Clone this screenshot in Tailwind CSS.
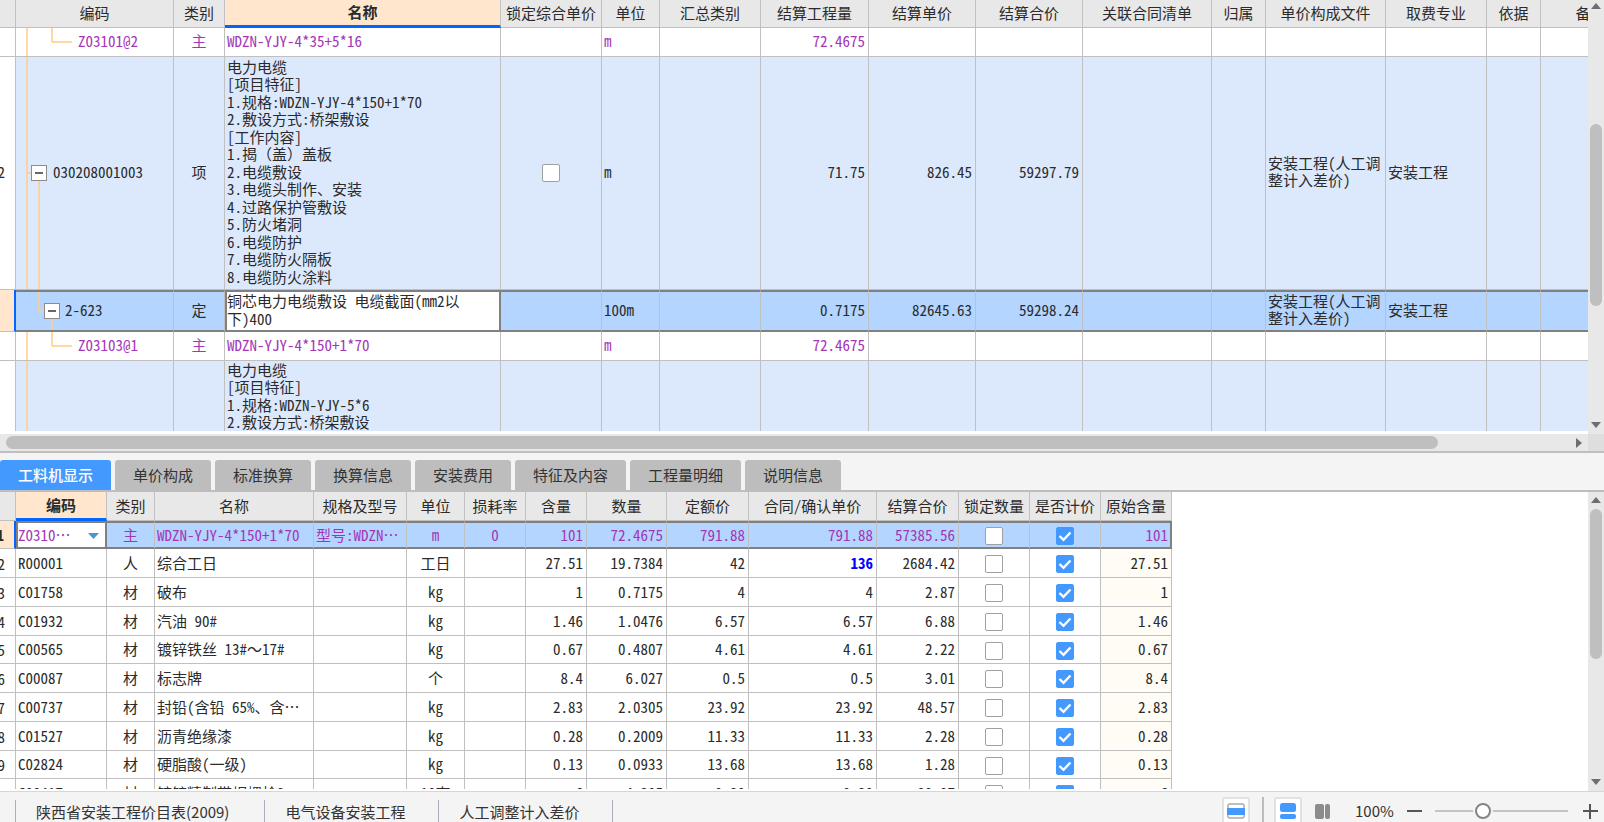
<!DOCTYPE html>
<html lang="zh-CN">
<head>
<meta charset="utf-8">
<title>结算工程量清单</title>
<script src="https://cdn.jsdelivr.net/npm/@tailwindcss/browser@4"></script>
</head>
<body class="bg-white text-[#2b2b2b]">
<div class="flex h-screen flex-col overflow-hidden font-['Noto_Sans_Mono_CJK_SC','Noto_Sans_CJK_SC',monospace] text-[15px] leading-[17px]">

  <!-- Bill of quantities -->
  <section class="flex h-[451px] shrink-0 flex-col">
    <div class="flex min-h-0 flex-1">
      <div class="mb-[3px] min-w-0 flex-1 overflow-hidden">
        <table class="w-[1641px] table-fixed border-separate border-spacing-0">
          <colgroup>
            <col class="w-4"><col class="w-[158px]"><col class="w-[51px]"><col class="w-[276px]"><col class="w-[101px]"><col class="w-[58px]"><col class="w-[101px]"><col class="w-[108px]"><col class="w-[107px]"><col class="w-[107px]"><col class="w-[129px]"><col class="w-[54px]"><col class="w-[120px]"><col class="w-[101px]"><col class="w-[54px]"><col class="w-[100px]">
          </colgroup>
          <thead id="bill-head"></thead>
          <tbody id="bill-body"></tbody>
        </table>
      </div>
      <div class="flex w-4 flex-col items-center bg-[#e8e8e8]">
        <svg class="mt-[3px] h-[6px] w-[10px] shrink-0" viewBox="0 0 10 6"><path d="M0 6 5 0l5 6z" fill="#6d6d75"/></svg>
        <div class="mt-[115px] h-[182px] w-3 rounded-full bg-[#bfbfbf]"></div>
        <svg class="mt-auto mb-[6px] h-[6px] w-[10px] shrink-0" viewBox="0 0 10 6"><path d="M0 0 5 6l5-6z" fill="#6d6d75"/></svg>
      </div>
    </div>
    <div class="flex h-[17px] shrink-0 bg-[#e8e8e8]">
      <div class="flex flex-1 items-center pl-[6px]">
        <div class="h-[13px] flex-1 rounded-full bg-[#bfbfbf]"></div>
        <svg class="mr-[6px] ml-[138px] h-[10px] w-[6px]" viewBox="0 0 6 10"><path d="M0 0 6 5 0 10z" fill="#6d6d75"/></svg>
      </div>
      <div class="w-4 bg-[#dedede]"></div>
    </div>
  </section>
  <div class="h-[2px] shrink-0 bg-[#bfbfbf]"></div>

  <!-- Detail tabs -->
  <nav class="flex shrink-0 gap-1 bg-[#f4f4f4] pt-[7px] font-['Noto_Sans_CJK_SC',sans-serif] text-[#333]" role="tablist">
    <button role="tab" aria-selected="true" class="h-[30px] rounded-t-[3px] bg-[#4499ff] px-[18px] pb-[2px] font-medium text-white">工料机显示</button>
    <button role="tab" class="h-[30px] rounded-t-[3px] bg-[#bdbdbd] px-[18px] pb-[2px]">单价构成</button>
    <button role="tab" class="h-[30px] rounded-t-[3px] bg-[#bdbdbd] px-[18px] pb-[2px]">标准换算</button>
    <button role="tab" class="h-[30px] rounded-t-[3px] bg-[#bdbdbd] px-[18px] pb-[2px]">换算信息</button>
    <button role="tab" class="h-[30px] rounded-t-[3px] bg-[#bdbdbd] px-[18px] pb-[2px]">安装费用</button>
    <button role="tab" class="h-[30px] rounded-t-[3px] bg-[#bdbdbd] px-[18px] pb-[2px]">特征及内容</button>
    <button role="tab" class="h-[30px] rounded-t-[3px] bg-[#bdbdbd] px-[18px] pb-[2px]">工程量明细</button>
    <button role="tab" class="h-[30px] rounded-t-[3px] bg-[#bdbdbd] px-[18px] pb-[2px]">说明信息</button>
  </nav>

  <!-- Labour, material and machine lines -->
  <section class="flex min-h-0 flex-1 border-t-2 border-[#bdbdbd]">
    <div class="mb-[2px] min-w-0 flex-1 overflow-hidden">
      <table class="w-[1172px] table-fixed border-separate border-spacing-0">
        <colgroup>
          <col class="w-4"><col class="w-[91px]"><col class="w-12"><col class="w-[159px]"><col class="w-[93px]"><col class="w-[58px]"><col class="w-[61px]"><col class="w-[61px]"><col class="w-[80px]"><col class="w-[82px]"><col class="w-[128px]"><col class="w-[82px]"><col class="w-[71px]"><col class="w-[71px]"><col class="w-[71px]">
        </colgroup>
        <thead id="item-head"></thead>
        <tbody id="item-body"></tbody>
      </table>
    </div>
    <div class="flex w-4 flex-col items-center bg-[#e8e8e8]">
      <svg class="mt-[5px] h-[6px] w-[10px] shrink-0" viewBox="0 0 10 6"><path d="M0 6 5 0l5 6z" fill="#6d6d75"/></svg>
      <div class="mt-[6px] h-[150px] w-3 rounded-full bg-[#bfbfbf]"></div>
      <svg class="mt-auto mb-[6px] h-[6px] w-[10px] shrink-0" viewBox="0 0 10 6"><path d="M0 0 5 6l5-6z" fill="#6d6d75"/></svg>
    </div>
  </section>

  <!-- Status bar -->
  <footer class="flex h-[31px] shrink-0 overflow-hidden border-t border-[#d6d6d6] bg-[#f4f4f4] font-['Noto_Sans_CJK_SC',sans-serif] text-[#333]">
    <div class="mt-2 flex pl-[15px] leading-6">
      <span class="border-l border-[#a9b0ba] pr-[35px] pl-5">陕西省安装工程价目表(2009)</span>
      <span class="border-l border-[#a9b0ba] pr-[33px] pl-5">电气设备安装工程</span>
      <span class="border-x border-[#a9b0ba] pr-[33px] pl-5">人工调整计入差价</span>
    </div>
    <div class="ml-auto flex items-start pt-[5px] pr-[6px]">
      <button aria-label="表格视图" class="grid h-7 w-7 place-items-center rounded-[3px] border-2 border-[#e2e2e2] bg-white">
        <svg class="h-4 w-[18px]" viewBox="0 0 18 16"><rect x="1" y="1" width="16" height="14" rx="2" fill="#fff" stroke="#aaa" stroke-width="1.5"/><path d="M0 5h18v7H0z" fill="#4499ff"/></svg>
      </button>
      <span class="ml-3 h-7 w-[2px] bg-[#bdbdbd]"></span>
      <button aria-label="上下布局" class="ml-[10px] grid h-7 w-7 place-items-center rounded-[3px] border-2 border-[#e2e2e2] bg-white">
        <svg class="h-4 w-4" viewBox="0 0 16 16" fill="#4499ff"><rect width="16" height="9" rx="2.5"/><rect y="11" width="16" height="5" rx="2"/></svg>
      </button>
      <button aria-label="左右布局" class="ml-[6px] grid h-7 w-7 place-items-center">
        <svg class="h-[15px] w-[15px]" viewBox="0 0 15 15" fill="#8c8c8c"><rect width="9" height="15" rx="2"/><rect x="10" width="5" height="15" rx="2"/></svg>
      </button>
      <span class="ml-[19px] w-[45px] pt-[2px] leading-6">100%</span>
      <button aria-label="缩小" class="ml-[7px] grid h-7 w-4 place-items-center"><svg class="h-4 w-4" viewBox="0 0 16 16" stroke="#555" stroke-width="2"><path d="M0 8h15"/></svg></button>
      <input type="range" aria-label="缩放比例" min="0" max="100" value="34" class="mr-[14px] ml-3 h-7 w-[133px] appearance-none bg-transparent [&::-webkit-slider-runnable-track]:h-[2px] [&::-webkit-slider-runnable-track]:bg-[#c4c4c4] [&::-webkit-slider-thumb]:-mt-[7px] [&::-webkit-slider-thumb]:h-4 [&::-webkit-slider-thumb]:w-4 [&::-webkit-slider-thumb]:appearance-none [&::-webkit-slider-thumb]:rounded-full [&::-webkit-slider-thumb]:border-2 [&::-webkit-slider-thumb]:border-[#858585] [&::-webkit-slider-thumb]:bg-white [&::-webkit-slider-thumb]:shadow-[0_0_0_2px_#f4f4f4]">
      <button aria-label="放大" class="grid h-7 w-4 place-items-center"><svg class="h-4 w-4" viewBox="0 0 16 16" stroke="#555" stroke-width="2"><path d="M1 8h15M8 1v15"/></svg></button>
    </div>
  </footer>
</div>

<script>
const GRID = 'border-r border-b border-[#c0c0c0]';
const PURPLE = 'text-[#a435b8]';

const headRow = (names, active, size) => '<tr>' + names.map((n, i) =>
  i === active
    ? `<th class="${size} border-r border-[#c0c0c0] border-b-[3px] border-b-[#0066ff] bg-[#ffe6cc] px-0 pt-0 text-center font-bold">${n}</th>`
    : `<th class="${size} ${GRID} overflow-hidden bg-[#e8e8e8] px-0 pt-0 text-center font-normal whitespace-nowrap">${n}</th>`).join('') + '</tr>';

const box = (label, on) => `<label class="relative mx-auto block h-[18px] w-[18px]">
  <input type="checkbox" aria-label="${label}" ${on ? 'checked' : ''} class="block h-[18px] w-[18px] appearance-none rounded-[2px] border border-[#a0a0a0] bg-white checked:border-[#4499ff] checked:bg-[#4499ff]">
  ${on ? '<svg class="pointer-events-none absolute inset-0 h-[18px] w-[18px]" viewBox="0 0 18 18" fill="none" stroke="#fff" stroke-width="2.4"><path d="M3.5 9 7.5 12.8 14.5 5.5"/></svg>' : ''}</label>`;

const lines = list => '<div class="*:leading-[17px] *:even:leading-[18px]">' + list.map(l => `<div>${l}</div>`).join('') + '</div>';

const fold = '<button aria-label="折叠" class="relative grid h-4 w-4 shrink-0 place-items-center border border-[#8c8c8c] bg-white"><svg class="h-[10px] w-[10px]" viewBox="0 0 10 10" stroke="#333" stroke-width="1.5"><path d="M1 5h8"/></svg></button>';

const tree = {
  leaf: '<line x1="11" y1="0" x2="11" y2="100%"/><line x1="36" y1="0" x2="36" y2="50%"/><line x1="36" y1="50%" x2="56" y2="50%"/>',
  item: '<line x1="11" y1="0" x2="11" y2="100%"/><line x1="11" y1="50%" x2="15" y2="50%"/><line x1="23" y1="50%" x2="23" y2="100%"/>',
  quota: '<line x1="23" y1="0" x2="23" y2="50%"/><line x1="23" y1="50%" x2="28" y2="50%"/><line x1="36" y1="50%" x2="36" y2="100%"/>',
  trunk: '<line x1="11" y1="0" x2="11" y2="100%"/>'
};
const indent = { leaf: 'pl-[62px]', item: 'gap-[6px] pl-[15px]', quota: 'gap-[5px] pl-7', trunk: '' };

document.getElementById('bill-head').innerHTML = headRow(
  ['', '编码', '类别', '名称', '锁定综合单价', '单位', '汇总类别', '结算工程量', '结算单价', '结算合价', '关联合同清单', '归属', '单价构成文件', '取费专业', '依据', '备注'], 3, 'h-7 pb-[3px]');

const bill = [
  { kind: 'leaf', h: 'h-[29px]', code: 'Z03101@2', type: '主', name: 'WDZN-YJY-4*35+5*16', unit: 'm', qty: '72.4675' },
  { kind: 'item', h: 'h-[233px]', no: '2', code: '030208001003', type: '项', unit: 'm', qty: '71.75', price: '826.45', total: '59297.79', lock: true, file: true,
    name: lines(['电力电缆', '[项目特征]', '1.规格:WDZN-YJY-4*150+1*70', '2.敷设方式:桥架敷设', '[工作内容]', '1.揭（盖）盖板', '2.电缆敷设', '3.电缆头制作、安装', '4.过路保护管敷设', '5.防火堵洞', '6.电缆防护', '7.电缆防火隔板', '8.电缆防火涂料']) },
  { kind: 'quota', h: 'h-[42px]', code: '2-623', type: '定', unit: '100m', qty: '0.7175', price: '82645.63', total: '59298.24', file: true,
    name: '<textarea aria-label="名称" rows="2" class="block h-[38px] w-full resize-none overflow-hidden bg-white leading-[18px] outline-none">铜芯电力电缆敷设 电缆截面(mm2以\n下)400</textarea>' },
  { kind: 'leaf', h: 'h-[29px]', code: 'Z03103@1', type: '主', name: 'WDZN-YJY-4*150+1*70', unit: 'm', qty: '72.4675' },
  { kind: 'trunk', h: 'h-[74px]', code: '', type: '', unit: '', qty: '',
    name: lines(['电力电缆', '[项目特征]', '1.规格:WDZN-YJY-5*6', '2.敷设方式:桥架敷设']) }
];

document.getElementById('bill-body').innerHTML = bill.map(r => {
  const sel = r.kind === 'quota';
  const tone = r.kind === 'leaf' ? 'bg-white ' + PURPLE : sel ? 'bg-[#b3d5ff]' : 'bg-[#dce9fd]';
  const cell = sel ? 'border-r border-r-[#c0c0c0] border-y-2 border-y-[#808080]' : GRID;
  const td = (cls, v) => `<td class="${cell} pt-0 pb-[3px] ${cls}">${v || ''}</td>`;
  return `<tr class="${r.h} ${tone}">
    <td class="border-b border-[#c0c0c0] px-0 pt-0 pb-[3px] text-[#2b2b2b] ${sel ? 'border-r-2 border-r-[#0066ff] bg-[#ffe6cc]' : 'border-r bg-white'}"><div class="flex justify-end overflow-hidden pr-[10px]">${r.no || ''}</div></td>
    <td class="${cell} relative p-0"><svg class="absolute inset-0 h-full w-full" stroke="#ffcc85" stroke-width="1.5">${tree[r.kind]}</svg>
      <div class="relative flex items-center ${indent[r.kind]}">${r.kind === 'item' || sel ? fold : ''}<span class="pb-[3px]">${r.code}</span></div></td>
    ${td('px-0 text-center', r.type)}
    <td class="${sel ? 'border-2 border-[#808080] bg-white p-0' : GRID + ' pt-0 pr-0 pb-[3px] pl-[2px]'}">${r.name}</td>
    <td class="${cell} p-0">${r.lock ? box('锁定综合单价', false) : ''}</td>
    ${td('pr-0 pl-[2px]', r.unit)}
    ${td('', '')}
    ${td('pr-[3px] text-right', r.qty)}
    ${td('pr-[3px] text-right', r.price)}
    ${td('pr-[3px] text-right', r.total)}
    ${td('', '')}${td('', '')}
    ${td('pr-0 pl-[2px] whitespace-nowrap', r.file ? lines(['安装工程(人工调', '整计入差价)']) : '')}
    ${td('pr-0 pl-[2px]', r.file ? '安装工程' : '')}
    ${td('', '')}${td('', '')}
  </tr>`;
}).join('');

document.getElementById('item-head').innerHTML = headRow(
  ['', '编码', '类别', '名称', '规格及型号', '单位', '损耗率', '含量', '数量', '定额价', '合同/确认单价', '结算合价', '锁定数量', '是否计价', '原始含量'], 1, 'h-[29px] pb-[2px]');

const items = [
  ['Z0310⋯', '主', 'WDZN-YJY-4*150+1*70', '型号:WDZN⋯', 'm', '0', '101', '72.4675', '791.88', '791.88', '57385.56'],
  ['R00001', '人', '综合工日', '', '工日', '', '27.51', '19.7384', '42', '136', '2684.42'],
  ['C01758', '材', '破布', '', 'kg', '', '1', '0.7175', '4', '4', '2.87'],
  ['C01932', '材', '汽油 90#', '', 'kg', '', '1.46', '1.0476', '6.57', '6.57', '6.88'],
  ['C00565', '材', '镀锌铁丝 13#～17#', '', 'kg', '', '0.67', '0.4807', '4.61', '4.61', '2.22'],
  ['C00087', '材', '标志牌', '', '个', '', '8.4', '6.027', '0.5', '0.5', '3.01'],
  ['C00737', '材', '封铅(含铅 65%、含⋯', '', 'kg', '', '2.83', '2.0305', '23.92', '23.92', '48.57'],
  ['C01527', '材', '沥青绝缘漆', '', 'kg', '', '0.28', '0.2009', '11.33', '11.33', '2.28'],
  ['C02824', '材', '硬脂酸(一级)', '', 'kg', '', '0.13', '0.0933', '13.68', '13.68', '1.28'],
  ['C00417', '材', '镀锌精制带帽螺栓2', '', '10套', '', '6', '4.305', '9.30', '9.30', '39.97']
];

document.getElementById('item-body').innerHTML = items.map((r, i) => {
  const sel = i === 0;
  const cell = sel ? 'border-r border-r-[#c0c0c0] border-y-2 border-y-[#808080]' : GRID;
  const td = (cls, v) => `<td class="${cell} pt-0 pb-[2px] whitespace-nowrap ${cls}">${v}</td>`;
  const tick = v => `<td class="${cell} px-0 pt-[2px] pb-0">${v}</td>`;
  const code = sel
    ? `<td class="border-2 border-[#808080] bg-white px-0 pt-0 pb-[2px]"><div class="relative"><select aria-label="编码" class="block w-full appearance-none leading-[17px] outline-none"><option>${r[0]}</option></select><svg class="pointer-events-none absolute top-[7px] right-[6px] h-[6px] w-[11px]" viewBox="0 0 11 6"><path d="M0 0h11L5.500 6z" fill="#4a97c9"/></svg></div></td>`
    : td('pr-0 pl-[2px]', r[0]);
  return `<tr class="${i % 4 ? 'h-[29px]' : 'h-7'} ${sel ? 'bg-[#b3d5ff] ' + PURPLE : 'bg-white'}">
    <td class="border-b border-[#c0c0c0] p-0 text-[#2b2b2b] ${sel ? 'border-r-2 border-r-[#0066ff] bg-[#ffe6cc] font-bold' : 'border-r'}"><div class="flex justify-end overflow-hidden pr-[10px]">${i + 1}</div></td>
    ${code}
    ${td('px-0 text-center', r[1])}
    ${td('pr-0 pl-[2px]', r[2])}
    ${td('pr-0 pl-[2px]', r[3])}
    ${td('px-0 text-center', r[4])}
    ${td('px-0 text-center', r[5])}
    ${td('pr-[3px] text-right', r[6])}
    ${td('pr-[3px] text-right', r[7])}
    ${td('pr-[3px] text-right', r[8])}
    ${td(i === 1 ? 'pr-[3px] text-right font-bold text-[#0000ff]' : 'pr-[3px] text-right', r[9])}
    ${td('pr-[3px] text-right', r[10])}
    ${tick(box('锁定数量', false))}
    ${tick(box('是否计价', true))}
    ${sel ? `<td class="border-y-2 border-r-2 border-[#808080] pt-0 pr-[2px] pb-[2px] text-right">${r[6]}</td>` : td('bg-[#fffbf5] pr-[3px] text-right', r[6])}
  </tr>`;
}).join('');
</script>
</body>
</html>
